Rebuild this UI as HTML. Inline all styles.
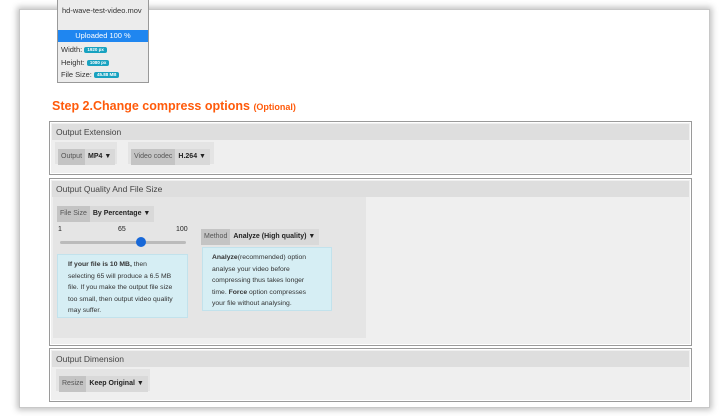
<!DOCTYPE html>
<html><head><style>
*{box-sizing:border-box;margin:0;padding:0}
body{width:720px;height:416px;background:#fff;font-family:"Liberation Sans",sans-serif;position:relative;overflow:hidden}
.card{position:absolute;left:19px;top:9px;width:691px;height:399px;background:#fff;border:1px solid #c8c8c8;box-shadow:0 0 6px 2px rgba(0,0,0,0.25)}
.abs{position:absolute}
.file{left:57px;top:0px;width:92px;height:83px;background:#ececec;border:1px solid #999;border-top:none;font-size:7.5px;color:#333;white-space:nowrap;overflow:hidden}
.badge{display:inline-block;background:#18a2c0;color:#fff;font-size:4.5px;line-height:6px;font-weight:bold;padding:0 3px;border-radius:2px;vertical-align:1px}
h2{position:absolute;left:52px;top:99px;color:#ff5a0a;font-size:12.5px;font-weight:bold;white-space:nowrap}
h2 small{font-size:9px}
.panel{position:absolute;left:49px;width:643px;border:1px solid #9a9a9a;background:#efefef;box-shadow:inset 0 0 0 1px #fff}
.ph{position:absolute;left:2px;right:2px;top:2px;height:16px;background:#dedede;font-size:8.5px;color:#444;padding:3px 4px;white-space:nowrap}
.grp{position:absolute;background:#e4e4e4;height:22px;padding:3px;white-space:nowrap}
.sel{display:inline-block;height:16px;font-size:7px;line-height:16px;background:#d9d9d9;color:#222;font-weight:bold;padding:0 4px 0 2px;white-space:nowrap}
.sel span{display:inline-block;background:#c4c4c4;color:#555;font-weight:normal;padding:0 3px;margin-left:-2px;margin-right:3px}
.info{position:absolute;background:#d6eef4;border:1px solid #c2e2ec;font-size:6.8px;line-height:11.5px;color:#333}
</style></head><body>
<div class="card"></div>
<div class="abs file">
 <div style="padding:6px 4px 0;height:21px">hd-wave-test-video.mov</div>
 <div style="background:#1f86f0;color:#fff;text-align:center;height:12px;line-height:12px;margin-top:9px">Uploaded 100 %</div>
 <div style="padding:2px 3px;line-height:12.5px">Width: <span class="badge">1920 px</span><br>Height: <span class="badge">1080 px</span><br>File Size: <span class="badge">45.88 MB</span></div>
</div>
<h2>Step 2.Change compress options <small>(Optional)</small></h2>
<div class="panel" style="top:121px;height:54px">
 <div class="ph">Output Extension</div>
 <div class="grp" style="left:5px;top:20px;width:62px"><div class="sel"><span>Output</span>MP4 ▼</div></div>
 <div class="grp" style="left:78px;top:20px;width:86px"><div class="sel"><span>Video codec</span>H.264 ▼</div></div>
</div>
<div class="panel" style="top:178px;height:168px">
 <div class="ph">Output Quality And File Size</div>
 <div class="abs" style="left:3px;top:18px;width:313px;height:141px;background:#e5e5e5"></div>
 <div class="grp" style="left:4px;top:21px;width:100px;background:none;padding:2px 3px"><div class="sel"><span>File Size</span>By Percentage ▼</div></div>
 <div class="abs" style="left:8px;top:47px;font-size:7px;color:#222">1</div>
 <div class="abs" style="left:68px;top:47px;font-size:7px;color:#222">65</div>
 <div class="abs" style="left:126px;top:47px;font-size:7px;color:#222">100</div>
 <div class="abs" style="left:10px;top:62px;width:126px;height:3px;background:#bbb;border-radius:2px"></div>
 <div class="abs" style="left:86px;top:58px;width:10px;height:10px;background:#1868d8;border-radius:50%"></div>
 <div class="info" style="left:7px;top:75px;width:131px;height:64px;padding:4px 14px 0 10px"><b>If your file is 10 MB,</b> then selecting 65 will produce a 6.5 MB file. If you make the output file size too small, then output video quality may suffer.</div>
 <div class="grp" style="left:151px;top:44px;width:130px;background:none;padding:2px 0"><div class="sel"><span>Method</span>Analyze (High quality) ▼</div></div>
 <div class="info" style="left:152px;top:68px;width:130px;height:64px;padding:4px 12px 0 9px"><b>Analyze</b>(recommended) option analyse your video before compressing thus takes longer time. <b>Force</b> option compresses your file without analysing.</div>
</div>
<div class="panel" style="top:348px;height:54px">
 <div class="ph">Output Dimension</div>
 <div class="grp" style="left:6px;top:20px;width:94px"><div class="sel"><span>Resize</span>Keep Original ▼</div></div>
</div>
</body></html>
